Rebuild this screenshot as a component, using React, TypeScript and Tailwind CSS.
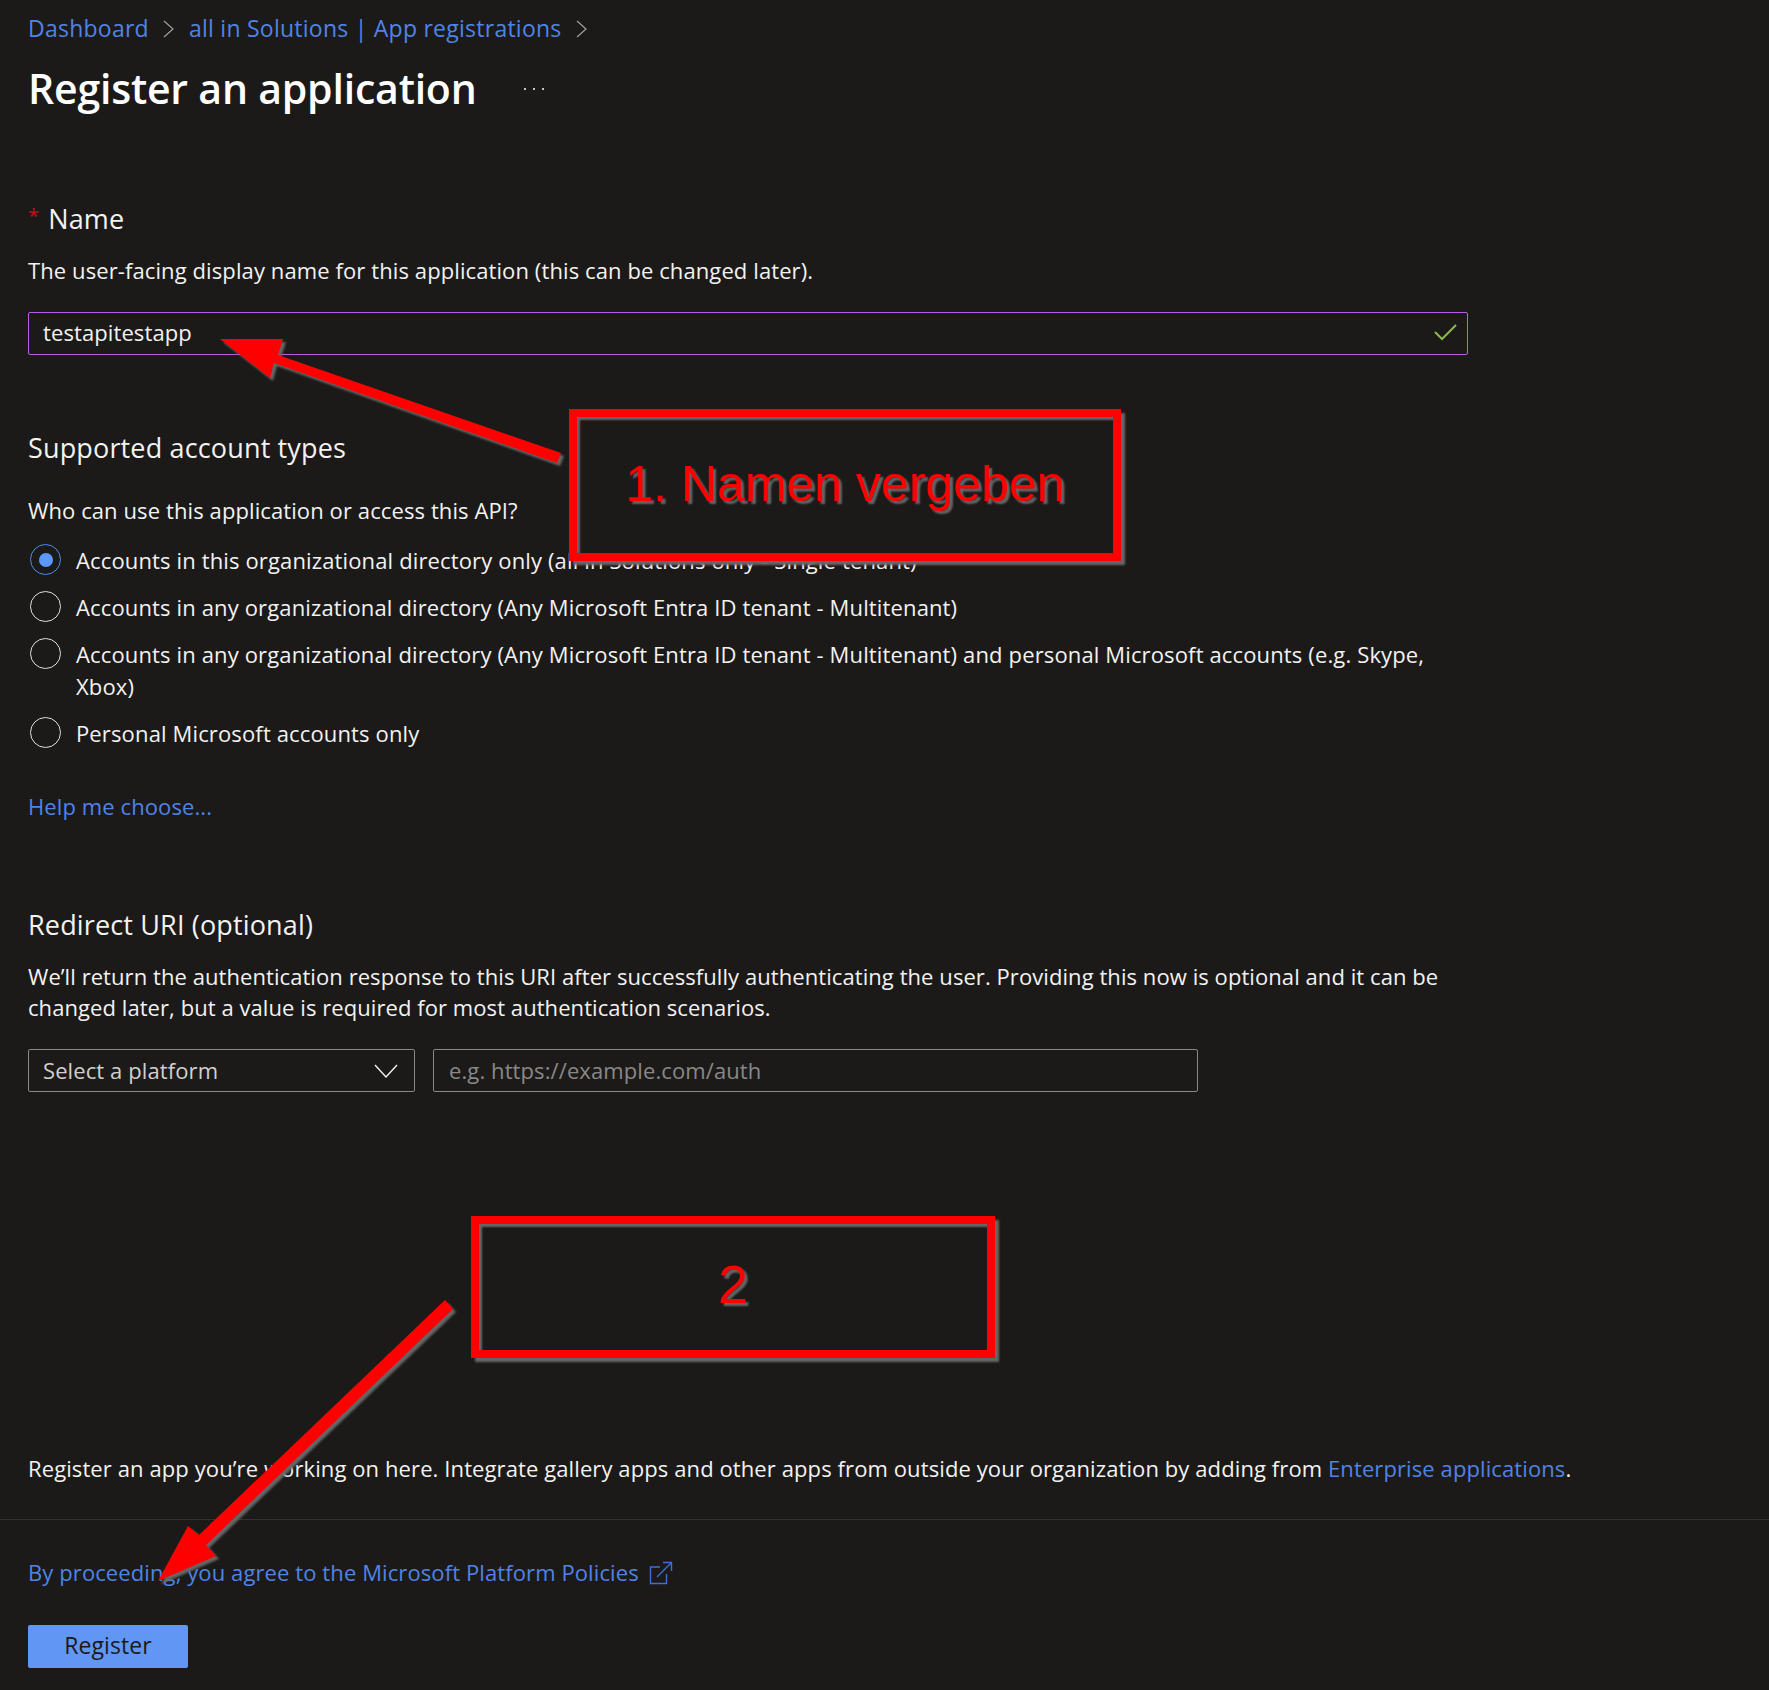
const textFont = { fontFamily: '"Open Sans", "Noto Sans", sans-serif' };

const accountTypes = [
  "Accounts in this organizational directory only (all in Solutions only - Single tenant)",
  "Accounts in any organizational directory (Any Microsoft Entra ID tenant - Multitenant)",
  "Accounts in any organizational directory (Any Microsoft Entra ID tenant - Multitenant) and personal Microsoft accounts (e.g. Skype, Xbox)",
  "Personal Microsoft accounts only",
];

function Crumb() {
  return (
    <svg width="14" height="20" viewBox="0 0 14 20" className="mx-[13px] shrink-0" fill="none" stroke="#a19f9d" strokeWidth="1.2">
      <path d="M2 2 L11 10 L2 18" />
    </svg>
  );
}

function Callout({ children, className }: { children: React.ReactNode; className: string }) {
  return (
    <div
      className={
        "absolute flex items-center justify-center border-[8px] border-[#ff0000] bg-[#1b1a19] text-[#ff0000] shadow-[4px_4px_2px_#666666,inset_3px_3px_2px_#666666] " +
        className
      }
      style={{ fontFamily: '"Liberation Sans", Arial, sans-serif', textShadow: "3px 3px 2px #666666" }}
    >
      {children}
    </div>
  );
}

export default function App() {
  return (
    <div
      className="relative min-h-[1690px] overflow-hidden bg-[#1b1a19] text-[22px] leading-[31px] tracking-[0.1px] text-[#f3f2f1]"
      style={textFont}
    >
      <div className="px-[28px] pt-[13px]">
        <nav className="flex h-[31px] items-center text-[23px] tracking-[0.25px] text-[#4f84e6]">
          <span>Dashboard</span>
          <Crumb />
          <span>all in Solutions | App registrations</span>
          <Crumb />
        </nav>

        <div className="mt-[16px] flex h-[56px] items-center">
          <h1 className="w-[496px] text-[41px] font-semibold leading-[56px] tracking-[-0.2px] text-white">
            Register an application
          </h1>
          <div className="mt-[2px] flex gap-[7px]">
            <span className="size-[2px] bg-[#c8c6c4]" />
            <span className="size-[2px] bg-[#c8c6c4]" />
            <span className="size-[2px] bg-[#c8c6c4]" />
          </div>
        </div>

        <label className="mt-[87px] flex items-center text-[27px] tracking-[0.15px]">
          <span className="mr-[9px] -translate-y-[3px] text-[20px] text-[#c50f1f]">*</span>
          Name
        </label>
        <p className="mt-[21px]">The user-facing display name for this application (this can be changed later).</p>
        <div className="relative mt-[26px] h-[43px] w-[1440px]">
          <input
            readOnly
            value="testapitestapp"
            className="h-full w-full rounded-[2px] border border-[#b45fe6] bg-transparent px-[14px] pb-[3px] text-[#f3f2f1] outline-none"
          />
          <svg className="absolute right-[11px] top-[11px]" width="23" height="18" viewBox="0 0 23 18" fill="none" stroke="#8cb84f" strokeWidth="2">
            <path d="M1 9 L8 16 L22 2" />
          </svg>
        </div>

        <h2 className="mt-[77px] text-[27px] font-normal leading-[32px] tracking-[0.15px]">Supported account types</h2>
        <p className="mt-[31px]">Who can use this application or access this API?</p>

        <div className="mt-[18px] flex w-[1440px] flex-col gap-[15px] leading-[32px] tracking-[0.14px]">
          {accountTypes.map((t, i) => (
            <div key={t} className="flex items-start">
              <span
                className={
                  "ml-[2px] mr-[15px] flex size-[31px] shrink-0 items-center justify-center rounded-full border " +
                  (i === 0 ? "border-[#4f8ce8]" : "border-[#e1dfdd]")
                }
              >
                {i === 0 && <span className="size-[14px] rounded-full bg-[#5d99fb]" />}
              </span>
              <span>{t}</span>
            </div>
          ))}
        </div>

        <a className="mt-[42px] block text-[#4f84e6]">Help me choose...</a>

        <h2 className="mt-[87px] text-[27px] font-normal leading-[32px] tracking-[0.15px]">Redirect URI (optional)</h2>
        <p className="mt-[20px] w-[1440px] tracking-[0.07px]">
          We’ll return the authentication response to this URI after successfully authenticating the user. Providing this
          now is optional and it can be changed later, but a value is required for most authentication scenarios.
        </p>

        <div className="mt-[26px] flex h-[43px] gap-[18px]">
          <div className="flex w-[387px] items-center justify-between rounded-[2px] border border-[#8a8886] pl-[14px] pr-[16px] text-[#d2d0ce]">
            <span>Select a platform</span>
            <svg width="24" height="14" viewBox="0 0 24 14" fill="none" stroke="#f3f2f1" strokeWidth="1.4">
              <path d="M1 1 L12 13 L23 1" />
            </svg>
          </div>
          <input
            readOnly
            placeholder="e.g. https://example.com/auth"
            className="w-[765px] rounded-[2px] border border-[#8a8886] bg-transparent px-[15px] outline-none placeholder:text-[#8a8886]"
          />
        </div>

        <p className="mt-[361px] whitespace-nowrap">
          Register an app you’re working on here. Integrate gallery apps and other apps from outside your organization by
          adding from <a className="text-[#4f84e6]">Enterprise applications</a>.
        </p>
      </div>

      <div className="mt-[35px] h-px bg-[#323130]" />

      <div className="px-[28px]">
        <a className="mt-[37px] flex items-center text-[#4f84e6]">
          By proceeding, you agree to the Microsoft Platform Policies
          <svg className="ml-[10px]" width="24" height="24" viewBox="0 0 24 24" fill="none" stroke="#3f6fd0" strokeWidth="1.4">
            <path d="M11 6 H1.5 V22.5 H17.5 V13" />
            <path d="M8 16 L22.5 1.5 M14 1.5 H22.5 V10" />
          </svg>
        </a>
        <button className="mt-[37px] h-[43px] w-[160px] rounded-[2px] bg-[#6196f5] pb-[2px] text-[23px] text-[#1b1a19]">Register</button>
      </div>

      {/* annotations drawn over the screenshot */}
      <Callout className="left-[569px] top-[409px] h-[152px] w-[552px] pb-[2px] text-[50px] leading-none tracking-normal">
        1. Namen vergeben
      </Callout>
      <Callout className="left-[471px] top-[1216px] h-[142px] w-[524px] pb-[6px] text-[54px] leading-none tracking-normal">
        2
      </Callout>
      <svg
        className="pointer-events-none absolute left-0 top-0 h-[1690px] w-[1769px] drop-shadow-[3px_3px_1px_#666666]"
        viewBox="0 0 1769 1690"
      >
        <polygon fill="#ff0000" points="220,339 283,339 278,355 561,453 557,463 274,363 270,378" />
        <polygon fill="#ff0000" points="445,1300 453,1309 206,1545 216,1556 158,1581 188,1526 199,1535" />
      </svg>
    </div>
  );
}
